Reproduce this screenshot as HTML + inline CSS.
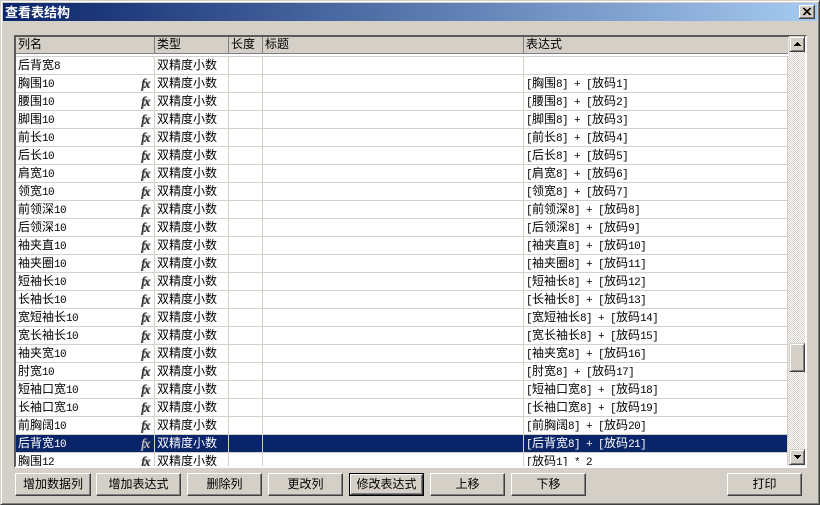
<!DOCTYPE html>
<html><head><meta charset="utf-8">
<style>
html,body{margin:0;padding:0}
body{width:820px;height:505px;position:relative;overflow:hidden;background:#d4d0c8;font:12px "WenQuanYi Zen Hei","Noto Sans CJK SC",sans-serif;color:#000}
.a{position:absolute;box-sizing:border-box}
.btn{position:absolute;box-sizing:border-box;top:473px;height:23px;background:#d4d0c8;border-top:1px solid #fff;border-left:1px solid #fff;border-right:1px solid #404040;border-bottom:1px solid #404040;box-shadow:inset -1px -1px 0 #808080;text-align:center;line-height:20px;font-size:12px}
.def{outline:1px solid #000;outline-offset:0;top:474px;height:21px;line-height:18px}
table{border-collapse:separate;border-spacing:0;table-layout:fixed;width:772px;position:absolute;left:0;top:0}
td{height:17px;padding:0 0 0 2px;border-bottom:1px solid #d4d0c8;border-right:1px solid #d4d0c8;box-sizing:content-box;white-space:nowrap;overflow:hidden;line-height:15px;vertical-align:top;background:#fff;position:relative;font-size:12px}
i{font-style:normal;font-family:"Liberation Mono",monospace;font-size:11px;letter-spacing:-.6px;line-height:0}
.fx{position:absolute;right:5px;top:3px;font:italic 14px/14px "Liberation Serif",serif;color:#222;text-shadow:1px 0 0 #777;letter-spacing:-1px}
tr.s td{background:#0a246a;color:#fff;border-bottom-color:#d4d0c8}
.h{position:absolute;top:0;height:17px;border-right:1px solid #808080;line-height:14px;padding-left:2px;box-sizing:border-box;font-size:12px}
.sb{position:absolute;box-sizing:border-box;background:#d4d0c8;border-top:1px solid #d4d0c8;border-left:1px solid #d4d0c8;border-right:1px solid #404040;border-bottom:1px solid #404040;box-shadow:inset 1px 1px 0 #fff,inset -1px -1px 0 #808080}
</style></head><body>
<div class="a" style="left:0;top:0;width:820px;height:505px;border-top:1px solid #d4d0c8;border-left:1px solid #d4d0c8;border-right:1px solid #404040;border-bottom:1px solid #404040;box-shadow:inset 1px 1px 0 #fff,inset -1px -1px 0 #808080"></div>
<div class="a" style="left:3px;top:3px;width:814px;height:18px;background:linear-gradient(90deg,#0a246a,#a6caf0);color:#fff;font-weight:bold;font-size:13px;line-height:17px;padding-left:2px">查看表结构</div>
<div class="a" style="left:799px;top:5px;width:16px;height:14px;background:#d4d0c8;border-right:1px solid #404040;border-bottom:1px solid #404040;box-shadow:inset 1px 1px 0 #fff,inset -1px -1px 0 #808080">
<svg width="15" height="13" style="position:absolute;left:0;top:0"><path d="M4 3L11 10M5 3L12 10M11 3L4 10M12 3L5 10" stroke="#000" stroke-width="1" fill="none"/></svg></div>

<div class="a" style="left:14px;top:35px;width:793px;height:433px;border-top:2px solid #5a5a5a;border-left:2px solid #5a5a5a;border-right:2px solid #fff;border-bottom:2px solid #fff;background:#fff"></div>

<div class="a" style="left:16px;top:37px;width:772px;height:17px;background:#d4d0c8;border-bottom:1px solid #808080">
<div class="h" style="left:0;width:139px">列名</div>
<div class="h" style="left:139px;width:74px">类型</div>
<div class="h" style="left:213px;width:34px">长度</div>
<div class="h" style="left:247px;width:261px">标题</div>
<div class="h" style="left:508px;width:264px;border-right:0">表达式</div>
</div>

<div class="a" style="left:16px;top:54px;width:772px;height:412px;overflow:hidden;background:#fff">
<div class="a" style="left:0;top:2px;width:772px;height:1px;background:#d4d0c8"></div>
<table style="top:3px">
<colgroup><col style="width:139px"><col style="width:74px"><col style="width:34px"><col style="width:261px"><col style="width:264px"></colgroup>
<tr><td>后背宽<i>8</i></td><td>双精度小数</td><td></td><td></td><td></td></tr>
<tr><td>胸围<i>10</i><span class="fx">fx</span></td><td>双精度小数</td><td></td><td></td><td><i>[</i>胸围<i>8] + [</i>放码<i>1]</i></td></tr>
<tr><td>腰围<i>10</i><span class="fx">fx</span></td><td>双精度小数</td><td></td><td></td><td><i>[</i>腰围<i>8] + [</i>放码<i>2]</i></td></tr>
<tr><td>脚围<i>10</i><span class="fx">fx</span></td><td>双精度小数</td><td></td><td></td><td><i>[</i>脚围<i>8] + [</i>放码<i>3]</i></td></tr>
<tr><td>前长<i>10</i><span class="fx">fx</span></td><td>双精度小数</td><td></td><td></td><td><i>[</i>前长<i>8] + [</i>放码<i>4]</i></td></tr>
<tr><td>后长<i>10</i><span class="fx">fx</span></td><td>双精度小数</td><td></td><td></td><td><i>[</i>后长<i>8] + [</i>放码<i>5]</i></td></tr>
<tr><td>肩宽<i>10</i><span class="fx">fx</span></td><td>双精度小数</td><td></td><td></td><td><i>[</i>肩宽<i>8] + [</i>放码<i>6]</i></td></tr>
<tr><td>领宽<i>10</i><span class="fx">fx</span></td><td>双精度小数</td><td></td><td></td><td><i>[</i>领宽<i>8] + [</i>放码<i>7]</i></td></tr>
<tr><td>前领深<i>10</i><span class="fx">fx</span></td><td>双精度小数</td><td></td><td></td><td><i>[</i>前领深<i>8] + [</i>放码<i>8]</i></td></tr>
<tr><td>后领深<i>10</i><span class="fx">fx</span></td><td>双精度小数</td><td></td><td></td><td><i>[</i>后领深<i>8] + [</i>放码<i>9]</i></td></tr>
<tr><td>袖夹直<i>10</i><span class="fx">fx</span></td><td>双精度小数</td><td></td><td></td><td><i>[</i>袖夹直<i>8] + [</i>放码<i>10]</i></td></tr>
<tr><td>袖夹圈<i>10</i><span class="fx">fx</span></td><td>双精度小数</td><td></td><td></td><td><i>[</i>袖夹圈<i>8] + [</i>放码<i>11]</i></td></tr>
<tr><td>短袖长<i>10</i><span class="fx">fx</span></td><td>双精度小数</td><td></td><td></td><td><i>[</i>短袖长<i>8] + [</i>放码<i>12]</i></td></tr>
<tr><td>长袖长<i>10</i><span class="fx">fx</span></td><td>双精度小数</td><td></td><td></td><td><i>[</i>长袖长<i>8] + [</i>放码<i>13]</i></td></tr>
<tr><td>宽短袖长<i>10</i><span class="fx">fx</span></td><td>双精度小数</td><td></td><td></td><td><i>[</i>宽短袖长<i>8] + [</i>放码<i>14]</i></td></tr>
<tr><td>宽长袖长<i>10</i><span class="fx">fx</span></td><td>双精度小数</td><td></td><td></td><td><i>[</i>宽长袖长<i>8] + [</i>放码<i>15]</i></td></tr>
<tr><td>袖夹宽<i>10</i><span class="fx">fx</span></td><td>双精度小数</td><td></td><td></td><td><i>[</i>袖夹宽<i>8] + [</i>放码<i>16]</i></td></tr>
<tr><td>肘宽<i>10</i><span class="fx">fx</span></td><td>双精度小数</td><td></td><td></td><td><i>[</i>肘宽<i>8] + [</i>放码<i>17]</i></td></tr>
<tr><td>短袖口宽<i>10</i><span class="fx">fx</span></td><td>双精度小数</td><td></td><td></td><td><i>[</i>短袖口宽<i>8] + [</i>放码<i>18]</i></td></tr>
<tr><td>长袖口宽<i>10</i><span class="fx">fx</span></td><td>双精度小数</td><td></td><td></td><td><i>[</i>长袖口宽<i>8] + [</i>放码<i>19]</i></td></tr>
<tr><td>前胸阔<i>10</i><span class="fx">fx</span></td><td>双精度小数</td><td></td><td></td><td><i>[</i>前胸阔<i>8] + [</i>放码<i>20]</i></td></tr>
<tr class="s"><td>后背宽<i>10</i><span class="fx" style="color:#ccc;text-shadow:1px 0 0 #666">fx</span></td><td>双精度小数</td><td></td><td></td><td><i>[</i>后背宽<i>8] + [</i>放码<i>21]</i></td></tr>
<tr><td>胸围<i>12</i><span class="fx">fx</span></td><td>双精度小数</td><td></td><td></td><td><i>[</i>放码<i>1] * 2</i></td></tr>
</table>
</div>

<div class="a" style="left:788px;top:37px;width:17px;height:429px;background-color:#fff;background-image:repeating-conic-gradient(#d4d0c8 0 25%,#fff 0 50%);background-size:2px 2px"></div>
<div class="sb" style="left:789px;top:36px;width:16px;height:16px"><svg width="14" height="14" style="position:absolute;left:0;top:0"><path d="M4 9H11V8H10V7H9V6H8V5H7V6H6V7H5V8H4Z" fill="#000"/></svg></div>
<div class="sb" style="left:789px;top:343px;width:16px;height:29px"></div>
<div class="sb" style="left:789px;top:449px;width:16px;height:16px"><svg width="14" height="14" style="position:absolute;left:0;top:0"><path d="M4 5H11V6H10V7H9V8H8V9H7V8H6V7H5V6H4Z" fill="#000"/></svg></div>

<div class="btn" style="left:15px;width:76px">增加数据列</div>
<div class="btn" style="left:96px;width:85px">增加表达式</div>
<div class="btn" style="left:187px;width:75px">删除列</div>
<div class="btn" style="left:268px;width:75px">更改列</div>
<div class="btn def" style="left:350px;width:73px">修改表达式</div>
<div class="btn" style="left:430px;width:75px">上移</div>
<div class="btn" style="left:511px;width:75px">下移</div>
<div class="btn" style="left:727px;width:75px">打印</div>
</body></html>
